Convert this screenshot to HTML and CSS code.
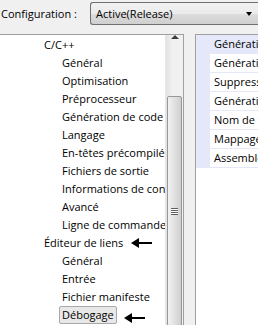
FILE: index.html
```html
<!DOCTYPE html>
<html lang="fr">
<head>
    <meta charset="UTF-8">
    <link rel="stylesheet" href="styles.css">
    <title>Pages de propriétés</title>
</head>
<body>

    <div class="topbar">
        <span class="config-label">Configuration :</span>
        <div class="combo">
            <span>Active(Release)</span>
            <span class="combo-arrow"></span>
        </div>
    </div>

    <div class="panes">
        <div class="tree-pane">
            <ul class="tree">
                <li class="lvl1">C/C++</li>
                <li class="lvl2">Général</li>
                <li class="lvl2">Optimisation</li>
                <li class="lvl2">Préprocesseur</li>
                <li class="lvl2">Génération de code</li>
                <li class="lvl2">Langage</li>
                <li class="lvl2">En-têtes précompilés</li>
                <li class="lvl2">Fichiers de sortie</li>
                <li class="lvl2">Informations de consultation</li>
                <li class="lvl2">Avancé</li>
                <li class="lvl2">Ligne de commande</li>
                <li class="lvl1">Éditeur de liens
                    <svg class="arrow" width="21" height="10" viewBox="0 0 21 10"><path d="M0 5 L8 0 L8 4 L21 4 L21 6 L8 6 L8 10 Z" fill="#000"/></svg>
                </li>
                <li class="lvl2">Général</li>
                <li class="lvl2">Entrée</li>
                <li class="lvl2">Fichier manifeste</li>
                <li class="lvl2"><span class="selected">Débogage</span>
                    <svg class="arrow arrow-sel" width="21" height="10" viewBox="0 0 21 10"><path d="M0 5 L8 0 L8 4 L21 4 L21 6 L8 6 L8 10 Z" fill="#000"/></svg>
                </li>
            </ul>
            <div class="scrollbar">
                <div class="scroll-up"><span></span></div>
                <div class="thumb"><span class="grip"></span></div>
            </div>
        </div>

        <div class="grid-pane">
            <div class="grid">
                <div class="row first">Génération des informations de débogage</div>
                <div class="row">Génération d'un fichier de base de données</div>
                <div class="row">Suppression des symboles privés</div>
                <div class="row">Génération d'un fichier de mappage</div>
                <div class="row">Nom de fichier de mappage</div>
                <div class="row">Mappage des exportations</div>
                <div class="row">Assembleur de débogage</div>
            </div>
        </div>
    </div>

</body>
</html>
```
FILE: styles.css
```css
body {
    margin: 0;
    width: 258px;
    height: 325px;
    overflow: hidden;
    background-color: #f0f0f0;
    font-family: "Open Sans", "DejaVu Sans", sans-serif;
    font-size: 11px;
    color: #000;
}

.topbar {
    height: 34px;
    display: flex;
    align-items: flex-start;
    padding-left: 1px;
    box-sizing: border-box;
}

.config-label {
    margin-top: 6px;
    width: 89px;
}

.combo {
    margin-top: 2px;
    flex: 1;
    height: 23px;
    box-sizing: border-box;
    border: 1px solid #707070;
    border-right: none;
    border-radius: 3px 0 0 3px;
    background: linear-gradient(#f2f2f2, #ebebeb 50%, #dddddd 51%, #cfcfcf);
    display: flex;
    align-items: center;
    justify-content: space-between;
    padding-left: 5px;
    padding-right: 6px;
}

.combo-arrow {
    width: 0;
    height: 0;
    border-left: 3.5px solid transparent;
    border-right: 3.5px solid transparent;
    border-top: 4px solid #000;
}

.panes {
    display: flex;
    gap: 11px;
    height: 291px;
}

.tree-pane {
    width: 184px;
    display: flex;
    background-color: #fff;
    border-top: 1px solid #a0a0a0;
    border-right: 1px solid #a0a0a0;
    box-sizing: border-box;
}

.tree {
    list-style: none;
    margin: 0;
    padding: 1px 0 0 0;
    flex: 1;
    overflow: hidden;
    white-space: nowrap;
}

.tree li {
    height: 18px;
    line-height: 18px;
    display: flex;
    align-items: center;
}

.lvl1 {
    padding-left: 44px;
}

.lvl2 {
    padding-left: 62px;
}

.selected {
    margin-left: -3px;
    padding: 0 2px;
    height: 16px;
    line-height: 16px;
    border: 1px solid #a9a9a9;
    border-radius: 2px;
    background-color: #e8e8e8;
}

.arrow {
    margin-left: 8px;
    flex-shrink: 0;
}

.arrow-sel {
    margin-left: 7px;
    margin-top: 5px;
}

.scrollbar {
    width: 17px;
    display: flex;
    flex-direction: column;
    align-items: center;
    background: linear-gradient(to right, #e3e3e3, #f0f0f0 40%, #f0f0f0);
    border-left: 1px solid #e6e6e6;
}

.scroll-up {
    height: 17px;
    width: 100%;
    display: flex;
    justify-content: center;
    align-items: center;
}

.scroll-up span {
    width: 0;
    height: 0;
    border-left: 4px solid transparent;
    border-right: 4px solid transparent;
    border-bottom: 4px solid #3c3c3c;
}

.thumb {
    margin-top: 57px;
    width: 15px;
    height: 230px;
    flex-shrink: 0;
    box-sizing: border-box;
    border: 1px solid #979797;
    border-radius: 2px;
    background: linear-gradient(to right, #f2f2f2, #e2e2e2 45%, #cfcfcf);
    display: flex;
    justify-content: center;
    align-items: center;
}

.grip {
    width: 7px;
    height: 7px;
    box-sizing: border-box;
    border-top: 1px solid #5f5f5f;
    border-bottom: 1px solid #5f5f5f;
    background: linear-gradient(#fff 0 1px, #5f5f5f 1px 2px, #fff 2px 3px, #5f5f5f 3px 4px, #fff 4px);
}

.grid-pane {
    flex: 1;
    background-color: #fff;
    border-top: 1px solid #a0a0a0;
    border-left: 1px solid #a0a0a0;
}

.grid {
    background-color: #e4e8f8;
    display: flex;
    flex-direction: column;
    gap: 1px;
    padding-bottom: 1px;
    white-space: nowrap;
    overflow: hidden;
}

.row {
    height: 18px;
    line-height: 18px;
    margin-left: 14px;
    padding-left: 4px;
    background-color: #fff;
}

.row.first {
    background-color: transparent;
}
```
